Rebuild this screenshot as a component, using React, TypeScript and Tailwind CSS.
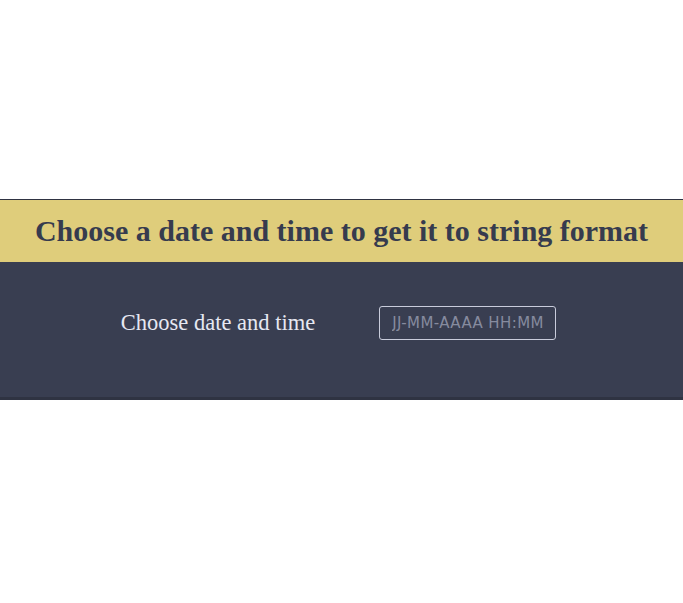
import React from "react";

const App = () => {
  return (
    <div className="min-h-screen w-full bg-white pt-[199px]">
      <section className="w-full border-t border-[#2f3342]">
        <div className="flex h-[62px] items-center justify-center bg-[#dfcd7b]">
          <h1 className="font-['Liberation_Serif',serif] text-[30px] font-bold leading-none text-[#363b4e]">
            Choose a date and time to get it to string format
          </h1>
        </div>
        <div className="flex items-center justify-center gap-16 border-b-[3px] border-[#2f3342] bg-[#393e51] pt-[44px] pr-[6px] pb-[57px]">
          <label
            htmlFor="datetime"
            className="font-['Liberation_Serif',serif] text-[22.5px] text-[#e6e8f2]"
          >
            Choose date and time
          </label>
          <input
            id="datetime"
            type="text"
            placeholder="JJ-MM-AAAA HH:MM"
            className="h-[34px] w-[177px] rounded-[3px] border border-[#c9ccdb] bg-transparent px-3 font-['DejaVu_Sans',sans-serif] text-[15px] tracking-[0.4px] text-[#e6e8f2] placeholder:text-[#868b9f] outline-none"
          />
        </div>
      </section>
    </div>
  );
};

export default App;
